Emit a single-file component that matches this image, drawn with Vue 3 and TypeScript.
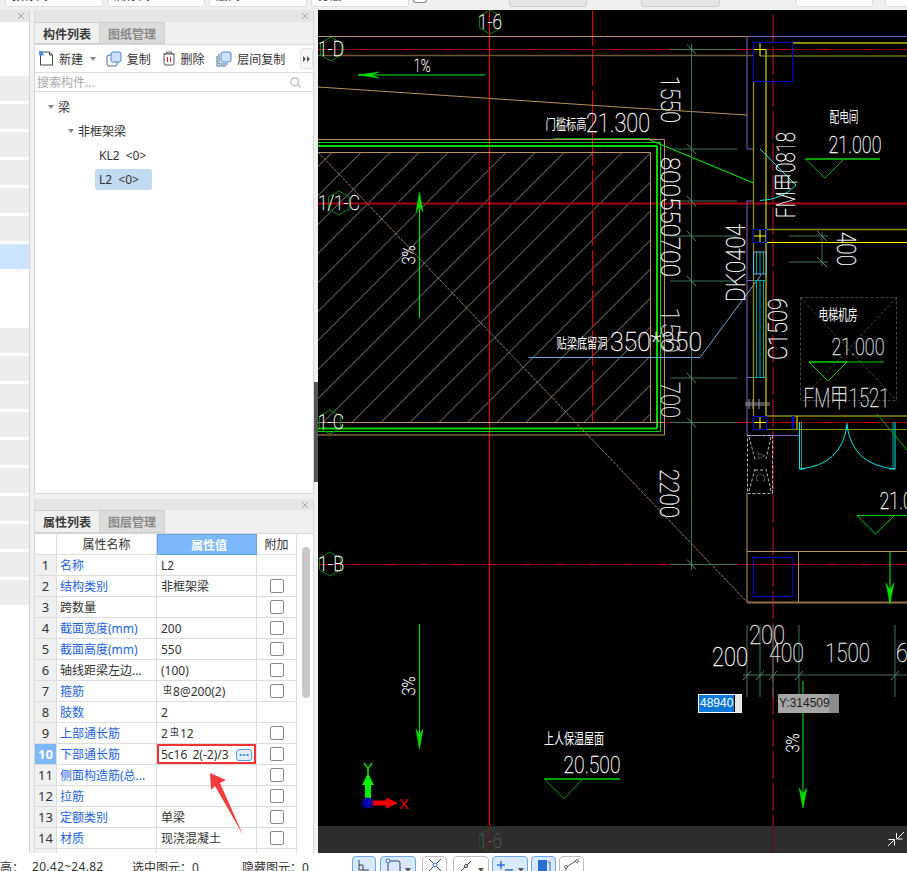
<script setup lang="ts">
type Seg = { x1: number; y1: number; x2: number; y2: number; c: string; w?: number; dash?: string };
type Label = { t: string; x: number; y: number; s: number; len?: number; rot?: number; c?: string; cjk?: boolean };

const ORANGE = '#b8925f';
const BROWN = '#6f5638';
const PURPLE = '#8460c4';
const YELLOW = '#ffff00';
const OLIVE = '#8c8c00';
const BLUE = '#0000d0';
const TEAL = '#00a8a8';
const CYAN = '#00e5e5';
const GREEN = '#00d800';
const DGREEN = '#00a000';
const DIM = '#3f7559';
const RED = '#e00010';
const DRED = '#6a0a14';

const seg = (x1: number, y1: number, x2: number, y2: number, c: string, w = 1, dash?: string): Seg => ({ x1, y1, x2, y2, c, w, dash });

const axes: Seg[] = [
  seg(318, 49.5, 907, 49.5, '#8a0010'),
  seg(318, 49.5, 907, 49.5, '#e00010', 1, '8 34'),
  seg(318, 203.5, 907, 203.5, '#a80010', 2),
  seg(318, 422.5, 907, 422.5, '#8a0010'),
  seg(318, 422.5, 907, 422.5, '#e00010', 1, '10 32'),
  seg(318, 564.5, 907, 564.5, '#8a0010'),
  seg(318, 564.5, 907, 564.5, '#e00010', 1, '8 26'),
  seg(592.5, 10, 592.5, 422, RED, 1.2, '36 4'),
  seg(773, 15, 773, 853, DRED, 2, '28 4'),
  seg(489.5, 10, 489.5, 853, RED, 1.2),
];

const outline: Seg[] = [
  seg(318, 36.5, 747, 36.5, ORANGE),
  seg(747, 36.5, 907, 36.5, PURPLE),
  seg(747, 36.5, 747, 149, PURPLE),
  seg(747, 149, 753, 149, PURPLE),
  seg(747, 201, 747, 435, PURPLE),
  seg(747, 201, 753, 201, PURPLE),
  seg(747, 280.5, 753, 280.5, PURPLE),
  seg(747, 377.5, 753, 377.5, PURPLE),
  seg(747, 435.5, 799, 435.5, PURPLE),
  seg(318, 55.5, 753, 55.5, BROWN, 1.5),
  seg(318, 87, 618, 107, ORANGE),
  seg(618, 107, 747, 115, ORANGE),
  seg(318, 139.5, 664.5, 139.5, ORANGE),
  seg(664.5, 139.5, 664.5, 435, ORANGE),
  seg(318, 435, 664.5, 435, ORANGE),
  seg(318, 142.5, 660.5, 142.5, GREEN),
  seg(660.5, 142.5, 660.5, 431.5, GREEN),
  seg(318, 431.5, 660.5, 431.5, GREEN),
  seg(318, 146, 657, 146, GREEN, 2),
  seg(657, 146, 657, 428.5, GREEN, 2),
  seg(318, 428.5, 657, 428.5, GREEN, 2),
  seg(318, 152.5, 650.5, 152.5, ORANGE),
  seg(650.5, 152.5, 650.5, 422.5, ORANGE),
  seg(318, 422.5, 664, 422.5, ORANGE),
  seg(650, 140, 753.5, 183, '#00d800', 1.3),
  seg(554, 138.5, 650, 138.5, DGREEN),
  seg(318, 152, 747, 602, '#a87f4d', 1, '3 1'),
  seg(528.5, 357.5, 700, 357.5, '#6fa8dc'),
  seg(700, 357.5, 761, 275, '#6fa8dc'),
];

const walls: Seg[] = [
  seg(766, 49.5, 766, 416, YELLOW),
  seg(753.5, 81, 753.5, 416, OLIVE, 1.3),
  seg(792.5, 43, 907, 43, OLIVE, 2),
  seg(760, 56, 907, 56, '#a8a800'),
  seg(760, 43, 760, 56, YELLOW),
  seg(754, 49.5, 766, 49.5, YELLOW),
  seg(766, 229.5, 907, 229.5, OLIVE, 1.5),
  seg(753.5, 242.5, 907, 242.5, YELLOW),
  seg(760, 230, 760, 242, YELLOW),
  seg(754, 236, 766, 236, YELLOW),
  seg(766, 416, 907, 416, OLIVE, 1.5),
  seg(766, 429.5, 907, 429.5, OLIVE),
  seg(760, 417, 760, 429, YELLOW),
  seg(754, 422.5, 766, 422.5, YELLOW),
  seg(756.5, 252, 756.5, 274, TEAL),
  seg(760, 252, 760, 274, TEAL),
  seg(763.5, 252, 763.5, 274, TEAL),
  seg(756.5, 280, 756.5, 377, TEAL),
  seg(760, 280, 760, 377, TEAL),
  seg(763.5, 280, 763.5, 377, TEAL),
  seg(753.5, 280.5, 766, 280.5, TEAL),
  seg(753.5, 377.5, 766, 377.5, TEAL),
  seg(760, 149, 796, 185, CYAN),
  seg(747, 493, 747, 602, ORANGE),
  seg(747, 551.5, 907, 551.5, ORANGE),
  seg(747, 602.5, 907, 602.5, '#8f7048', 2),
  seg(798.5, 551, 798.5, 602, ORANGE),
  seg(745, 403, 770, 403, '#9a9a9a'),
  seg(745, 405, 770, 405, '#9a9a9a'),
  seg(749, 399, 749, 409, '#9a9a9a'),
  seg(753, 399, 753, 409, '#9a9a9a'),
  seg(759, 399, 759, 409, '#9a9a9a'),
  seg(793, 416, 793, 429, BLUE, 2),
  seg(797, 416, 797, 429, YELLOW),
  seg(799.5, 422, 799.5, 469, CYAN),
  seg(801.5, 422, 801.5, 469, TEAL),
  seg(893, 422, 893, 469, TEAL),
  seg(895, 422, 895, 469, CYAN),
  seg(799.5, 469, 805, 469, CYAN),
  seg(889, 469, 895, 469, CYAN),
  seg(877, 414, 907, 450, '#00b000'),
];

const vTicks = [49.5, 149, 201, 236, 281, 378, 422.5, 564.5];
const hTicks = [747, 760, 773, 799, 895];

const dims: Seg[] = [
  seg(691.5, 44, 691.5, 570, DIM),
  ...vTicks.map((y) => seg(670, y, 737, y, DIM)),
  ...vTicks.map((y) => seg(687, y - 5, 696, y + 5, '#4d8a6a')),
  seg(822, 232, 822, 266, DIM),
  seg(789, 236, 828, 236, DIM),
  seg(789, 262, 828, 262, DIM),
  seg(817, 231, 827, 241, '#4d8a6a'),
  seg(817, 257, 827, 267, '#4d8a6a'),
  seg(743, 675, 907, 675, DIM),
  ...hTicks.map((x) => seg(x, 625, x, 697, DIM)),
  ...hTicks.map((x) => seg(x - 4, 680, x + 4, 671, '#4d8a6a')),
];

const arrows: Seg[] = [
  seg(358, 75, 485, 75, DGREEN, 1.5),
  seg(419.5, 194, 419.5, 318, GREEN, 1.2),
  seg(419.5, 624, 419.5, 748, GREEN, 1.2),
  seg(803, 681, 803, 806, DGREEN, 1.5),
  seg(890, 552, 890, 603, GREEN, 1.2),
];
const arrowHeads = [
  '358,75 379,72 372,75 379,78',
  '419.5,192 416,212 419.5,206 423,212',
  '419.5,749 416,729 419.5,735 423,729',
  '803,808 799,788 803,794 807,788',
  '890,604 886,583 890,590 894,583',
];

const triangles = [
  { pts: '805.5,159 825,178 844,159', line: seg(805.5, 159, 880, 159, DGREEN, 2), c: DGREEN },
  { pts: '809,362 828,381 847,362', line: seg(809, 362, 884, 362, GREEN), c: GREEN },
  { pts: '857,515.5 875.5,534 894.5,515.5', line: seg(857, 515.5, 907, 515.5, GREEN), c: GREEN },
  { pts: '544,779 564,798.5 583,779', line: seg(544, 779, 620, 779, DGREEN, 2), c: DGREEN },
];

const hexPoints = (cx: number, cy: number, r = 12) =>
  [0, 1, 2, 3, 4, 5]
    .map((i) => {
      const a = (Math.PI / 3) * i - Math.PI / 2;
      return `${(cx + r * Math.cos(a)).toFixed(1)},${(cy + r * Math.sin(a)).toFixed(1)}`;
    })
    .join(' ');
const hexes = [
  [490, 22],
  [331, 49],
  [339, 203],
  [330, 422],
  [330, 564],
];

const labels: Label[] = [
  { t: '1-6', x: 490, y: 22, s: 20, len: 24 },
  { t: '1-D', x: 331, y: 49, s: 20, len: 26 },
  { t: '1/1-C', x: 339, y: 203, s: 20, len: 42 },
  { t: '1-C', x: 331, y: 422, s: 20, len: 26 },
  { t: '1-B', x: 331, y: 564, s: 20, len: 26 },
  { t: '1%', x: 422, y: 65, s: 19, len: 17 },
  { t: '3%', x: 408, y: 255, s: 19, len: 19, rot: -90 },
  { t: '3%', x: 408, y: 686, s: 19, len: 19, rot: -90 },
  { t: '3%', x: 792, y: 743, s: 19, len: 19, rot: -90 },
  { t: '门槛标高', x: 566, y: 123, s: 14, len: 41, cjk: true },
  { t: '21.300', x: 618, y: 123, s: 26, len: 64 },
  { t: '贴梁底留洞', x: 582, y: 342, s: 14, len: 51, cjk: true },
  { t: '350*350', x: 656, y: 342, s: 26, len: 92 },
  { t: '配电间', x: 844, y: 115, s: 15, len: 29, cjk: true },
  { t: '21.000', x: 855, y: 145, s: 23, len: 53 },
  { t: '电梯机房', x: 838, y: 313, s: 15, len: 39, cjk: true },
  { t: '21.000', x: 858, y: 347, s: 23, len: 53, c: '#e0e0e0' },
  { t: 'FM甲1521', x: 846.5, y: 398, s: 26, len: 86, c: '#e8e8e8' },
  { t: '21.000', x: 906, y: 501, s: 23, len: 53 },
  { t: '上人保温屋面', x: 574, y: 737, s: 15, len: 60, cjk: true },
  { t: '20.500', x: 592, y: 765, s: 23, len: 57 },
  { t: '1550', x: 670, y: 99.5, s: 26, len: 47, rot: 90 },
  { t: '800', x: 670, y: 177, s: 26, len: 40, rot: 90 },
  { t: '550', x: 670, y: 217, s: 26, len: 40, rot: 90 },
  { t: '700', x: 670, y: 257, s: 26, len: 40, rot: 90 },
  { t: '150', x: 670, y: 330, s: 26, len: 46, rot: 90, c: '#d0d0d0' },
  { t: '700', x: 670, y: 400, s: 26, len: 36, rot: 90, c: '#e0e0e0' },
  { t: '2200', x: 669, y: 493.5, s: 26, len: 49, rot: 90 },
  { t: '400', x: 845.5, y: 249, s: 26, len: 34, rot: 90 },
  { t: 'FM甲0818', x: 786, y: 175, s: 26, len: 86, rot: -90 },
  { t: 'DK0404', x: 735.5, y: 263, s: 26, len: 78, rot: -90 },
  { t: 'C1509', x: 778, y: 329, s: 26, len: 62, rot: -90 },
  { t: '200', x: 730, y: 657, s: 25, len: 36 },
  { t: '200', x: 767, y: 635, s: 25, len: 36, c: '#e0e0e0' },
  { t: '400', x: 786.5, y: 653, s: 25, len: 35, c: '#e0e0e0' },
  { t: '1500', x: 847.5, y: 653, s: 25, len: 45, c: '#e8e8e8' },
  { t: '6', x: 902, y: 653, s: 25, len: 12, c: '#e8e8e8' },
];

type Row = { no: number; name: string; value?: string; symbol?: [string, string]; link?: boolean; check?: boolean };
const rows: Row[] = [
  { no: 1, name: '名称', value: 'L2', link: true, check: false },
  { no: 2, name: '结构类别', value: '非框架梁', link: true, check: true },
  { no: 3, name: '跨数量', value: '', check: true },
  { no: 4, name: '截面宽度(mm)', value: '200', link: true, check: true },
  { no: 5, name: '截面高度(mm)', value: '550', link: true, check: true },
  { no: 6, name: '轴线距梁左边...', value: '(100)', check: true },
  { no: 7, name: '箍筋', symbol: ['', '8@200(2)'], link: true, check: true },
  { no: 8, name: '肢数', value: '2', link: true, check: false },
  { no: 9, name: '上部通长筋', symbol: ['2', '12'], link: true, check: true },
  { no: 10, name: '下部通长筋', value: '5c16 2(-2)/3', link: true, check: true },
  { no: 11, name: '侧面构造筋(总...', value: '', link: true, check: true },
  { no: 12, name: '拉筋', value: '', link: true, check: true },
  { no: 13, name: '定额类别', value: '单梁', link: true, check: true },
  { no: 14, name: '材质', value: '现浇混凝土', link: true, check: true },
  { no: 15, name: '', value: '', check: false },
];
const activeRow = 10;

const sideRows = [
  ...[0, 1, 2, 3, 4, 5].map(() => 'fill'),
  'active',
  'gap',
  'gap',
  ...[0, 1, 2, 3, 4, 5, 6, 7, 8, 9].map(() => 'fill'),
];
</script>

<template>
  <div class="app">
    <div class="topbar">
      <span class="field" style="width: 98px">顶标高</span>
      <span class="field" style="width: 98px">底标高</span>
      <span class="field" style="width: 98px">层高</span>
      <span class="field" style="width: 98px">分层1</span>
      <span class="tick"></span>
      <span class="top-label" style="width: 74px">照射长度:</span>
      <span class="field off" style="width: 78px">0</span>
      <span class="top-label" style="width: 46px">复制长度:</span>
      <span class="field off" style="width: 79px">0</span>
      <span class="top-label" style="width: 67px">连梁总距离:</span>
      <span class="field" style="width: 78px">100</span>
      <span class="field" style="width: 30px; margin-left: 8px">+</span>
    </div>

    <div class="main">
      <aside class="side">
        <div class="bar">
          <svg class="close" viewBox="0 0 8 8"><path d="M1 1l6 6M7 1l-6 6" /></svg>
        </div>
        <div class="side-list">
          <div v-for="(kind, i) in sideRows" :key="i" class="side-row" :class="kind"></div>
        </div>
      </aside>

      <div class="panels">
        <section class="panel upper">
          <div class="bar">
            <svg class="close" viewBox="0 0 8 8"><path d="M1 1l6 6M7 1l-6 6" /></svg>
          </div>
          <div class="tabs">
            <span class="tab on">构件列表</span>
            <span class="tab">图纸管理</span>
          </div>
          <div class="tools">
            <span class="tool new">
              <svg width="15" height="15" viewBox="0 0 15 15">
                <path d="M1.500 3.500V14h12V4l-3-3H5" fill="#fff" stroke="#444" />
                <path d="M10.500 1v3h3" fill="none" stroke="#444" />
                <rect x="0" y="0" width="4.500" height="4.500" fill="#4a8fe0" />
              </svg>
              新建<i class="caret"></i>
            </span>
            <span class="tool copy">
              <svg width="16" height="16" viewBox="0 0 16 16">
                <rect x="1" y="4" width="10" height="11" rx="2" fill="#fff" stroke="#4a6a90" />
                <rect x="5" y="1" width="10" height="10" rx="2" fill="#cfe2fa" stroke="#4a86d8" />
              </svg>
              复制
            </span>
            <span class="tool del">
              <svg width="14" height="15" viewBox="0 0 14 15">
                <path d="M1 3h12M4.500 3V1h5v2" fill="none" stroke="#555" />
                <rect x="2" y="3" width="10" height="11" rx="2" fill="#fff" stroke="#555" />
                <path d="M5.500 6v5M8.500 6v5" stroke="#d02020" />
              </svg>
              删除
            </span>
            <span class="tool layer">
              <svg width="16" height="16" viewBox="0 0 16 16">
                <path d="M1 5v10h9M3 3v10h9" fill="none" stroke="#4a6a90" />
                <rect x="5" y="1" width="10" height="10" rx="2" fill="#cfe2fa" stroke="#4a86d8" />
              </svg>
              层间复制
            </span>
            <span class="more">
              <svg width="7" height="6" viewBox="0 0 7 6"><path d="M0 0l3 3-3 3zM4 0l3 3-3 3z" fill="#555" /></svg>
            </span>
          </div>
          <div class="search">
            <span>搜索构件...</span>
            <svg width="11" height="11" viewBox="0 0 11 11">
              <circle cx="4.800" cy="4.800" r="4" fill="none" stroke="#bbb" stroke-width="1.200" />
              <path d="M8 8l2.500 2.500" stroke="#bbb" stroke-width="1.200" />
            </svg>
          </div>
          <ul class="tree">
            <li class="lv1"><i class="caret"></i>梁</li>
            <li class="lv2"><i class="caret"></i>非框架梁</li>
            <li class="lv3">KL2 &lt;0&gt;</li>
            <li class="lv3"><span class="picked">L2 &lt;0&gt;</span></li>
          </ul>
        </section>

        <section class="panel lower">
          <div class="bar">
            <svg class="close" viewBox="0 0 8 8"><path d="M1 1l6 6M7 1l-6 6" /></svg>
          </div>
          <div class="tabs">
            <span class="tab on">属性列表</span>
            <span class="tab">图层管理</span>
          </div>
          <div class="grid-wrap">
            <div class="grid">
              <div class="grid-row head">
                <span class="cell no"></span>
                <span class="cell name">属性名称</span>
                <span class="cell val">属性值</span>
                <span class="cell extra">附加</span>
              </div>
              <div v-for="row in rows" :key="row.no" class="grid-row">
                <span class="cell no" :class="{ current: row.no === activeRow }">{{ row.no }}</span>
                <span class="cell name" :class="{ link: row.link }">{{ row.name }}</span>
                <span class="cell val" :class="{ editing: row.no === activeRow }">
                  <template v-if="row.symbol">{{ row.symbol[0] }}<sup class="rebar">虫</sup>{{ row.symbol[1] }}</template>
                  <template v-else>{{ row.value }}</template>
                  <span v-if="row.no === activeRow" class="dots">···</span>
                </span>
                <span class="cell extra"><i v-if="row.check" class="box"></i></span>
              </div>
            </div>
            <div class="scroll"><div class="thumb"></div></div>
          </div>
        </section>
      </div>

      <div class="splitter"><div class="grip"></div></div>

      <div class="canvas">
        <svg class="drawing" viewBox="318 10 589 843" width="589" height="843">
          <defs>
            <clipPath id="hatch-clip"><rect x="318" y="153" width="332" height="269" /></clipPath>
          </defs>

          <g clip-path="url(#hatch-clip)">
            <line
              v-for="k in 32"
              :key="k"
              :x1="484.500 + 29 * (k - 12) - 153"
              y1="153"
              :x2="484.500 + 29 * (k - 12) - 422"
              y2="422"
              stroke="#858585"
            />
          </g>

          <line
            v-for="(l, i) in [...axes, ...outline, ...dims, ...walls, ...arrows]"
            :key="i"
            :x1="l.x1"
            :y1="l.y1"
            :x2="l.x2"
            :y2="l.y2"
            :stroke="l.c"
            :stroke-width="l.w"
            :stroke-dasharray="l.dash"
          />

          <polygon v-for="(p, i) in arrowHeads" :key="'h' + i" :points="p" fill="#00e000" stroke="#00e000" stroke-width="0.500" />
          <polygon v-for="(h, i) in hexes" :key="'x' + i" :points="hexPoints(h[0], h[1])" fill="none" stroke="#0a8a0a" />

          <g fill="none" :stroke="BLUE">
            <rect x="753.500" y="42.500" width="39" height="39" />
            <rect x="753.500" y="229.500" width="13" height="13" />
            <rect x="753.500" y="416.500" width="13" height="13" />
            <rect x="753.500" y="557.500" width="39" height="39" />
          </g>
          <rect x="753.500" y="252" width="13" height="22" fill="none" stroke="#6fb0e0" />

          <g fill="none" :stroke="CYAN">
            <path d="M760 200.500 Q782 200 796 185" />
            <path d="M799.500 469 Q842 465 847 425 Q852 465 895 469" />
            <path d="M847 423v6" />
          </g>

          <g fill="none" stroke="#454545" stroke-dasharray="3 2">
            <rect x="800.500" y="297.500" width="96" height="103" />
            <path d="M800.500 297.500L896.500 400.500M896.500 297.500L800.500 400.500" />
          </g>

          <g fill="none" stroke="#b8b8b8" stroke-dasharray="3 2">
            <rect x="747.500" y="435.500" width="25" height="58" />
            <path d="M749 437l6 22M771 437l-5 22M749 491l6-22M771 491l-5-22M755 470h10" />
          </g>
          <text class="cad thin" x="760" y="456" font-size="13" fill="#d0d0d0" text-anchor="middle" dominant-baseline="central" transform="rotate(90 760 456)">A</text>
          <text class="cad thin" x="760" y="478" font-size="13" fill="#d0d0d0" text-anchor="middle" dominant-baseline="central" transform="rotate(90 760 478)">C</text>

          <g v-for="(t, i) in triangles" :key="'t' + i">
            <polygon :points="t.pts" fill="none" :stroke="t.c" />
            <line :x1="t.line.x1" :y1="t.line.y1" :x2="t.line.x2" :y2="t.line.y2" :stroke="t.c" :stroke-width="t.line.w" />
          </g>

          <text
            v-for="(l, i) in labels"
            :key="'l' + i"
            class="cad"
            :class="{ thin: !l.cjk, han: l.cjk }"
            :x="l.x"
            :y="l.y"
            :font-size="l.s"
            :fill="l.c || '#ffffff'"
            :stroke="l.cjk ? undefined : l.c || '#ffffff'"
            :textLength="l.len"
            lengthAdjust="spacingAndGlyphs"
            text-anchor="middle"
            dominant-baseline="central"
            :transform="l.rot ? `rotate(${l.rot} ${l.x} ${l.y})` : undefined"
          >{{ l.t }}</text>

          <!-- UCS marker -->
          <rect x="365" y="782" width="6" height="21" fill="#00f000" />
          <polygon points="368,773 374,785 362,785" fill="#00f000" />
          <rect x="371" y="800.500" width="17" height="5" fill="#f00000" />
          <polygon points="398,803 386,797.500 386,808.500" fill="#f00000" />
          <circle cx="367.700" cy="803" r="5.500" fill="#0000a8" />
          <text class="axis" x="368" y="767" fill="#00f000" text-anchor="middle" dominant-baseline="central">Y</text>
          <text class="axis" x="404" y="803" fill="#f00000" text-anchor="middle" dominant-baseline="central">X</text>

          <!-- bottom strip sits over the drawing -->
          <rect x="318" y="826" width="589" height="27" fill="#2d2d2d" />
          <line x1="489.500" y1="826" x2="489.500" y2="853" stroke="#7a1018" />
          <line x1="773" y1="826" x2="773" y2="853" stroke="#4a1a1e" stroke-width="2" />
          <polygon :points="hexPoints(490, 840)" fill="none" stroke="#254a25" />
          <text class="cad thin" x="490" y="841" font-size="20" fill="#6e6e6e" textLength="24" lengthAdjust="spacingAndGlyphs" text-anchor="middle" dominant-baseline="central">1-6</text>
          <path d="M888 845l7-7M888.500 838.500h6v6M904 831l-7 7M896.500 832v6h6" fill="none" stroke="#fff" transform="translate(0 1)" />
        </svg>

        <div class="coord x-input"><span class="sel">48940</span></div>
        <div class="coord y-tip">Y:314509</div>
      </div>
    </div>

    <footer class="status">
      <span class="stat first">标高：</span>
      <span class="stat range">20.42~24.82</span>
      <span class="stat chosen">选中图元：0</span>
      <span class="stat hidden-count">隐藏图元：0</span>
      <div class="snaps">
        <span class="snap on first-snap">
          <svg width="14" height="16" viewBox="0 0 14 16"><path d="M2 2v10h10M2 7h4v5" fill="none" stroke="#345" /></svg>
        </span>
        <span class="snap on wide">
          <svg width="16" height="16" viewBox="0 0 16 16"><path d="M3 3h10a2 2 0 0 1 2 2v10M3 3v12" fill="none" stroke="#345" /><circle cx="3" cy="3" r="2" fill="#fff" stroke="#2a70d0" /></svg>
          <i class="caret"></i>
        </span>
        <span class="snap small gap">
          <svg width="16" height="16" viewBox="0 0 16 16"><path d="M2 1l12 12M14 1L2 13" stroke="#345" /><circle cx="8" cy="7" r="2" fill="#fff" stroke="#2a70d0" /></svg>
        </span>
        <span class="snap wide">
          <svg width="16" height="16" viewBox="0 0 16 16"><path d="M2 14L13 3" stroke="#345" /><circle cx="8" cy="8" r="1.500" fill="#fff" stroke="#345" /></svg>
          <i class="caret"></i>
        </span>
        <span class="snap on wide">
          <svg width="18" height="16" viewBox="0 0 18 16"><path d="M5 3v8M1 7h8M9 12h8" fill="none" stroke="#2a70d0" stroke-width="1.400" /></svg>
          <i class="caret"></i>
        </span>
        <span class="snap on small">
          <svg width="14" height="16" viewBox="0 0 14 16"><rect x="1" y="2" width="9" height="12" fill="#2a70d0" /><path d="M11 4h2v10H4" fill="none" stroke="#2a70d0" /></svg>
        </span>
        <span class="snap small">
          <svg width="16" height="16" viewBox="0 0 16 16"><path d="M2 14V9l10-6" fill="none" stroke="#666" /><circle cx="2" cy="9" r="1.500" fill="#fff" stroke="#666" /><circle cx="13" cy="3" r="1.500" fill="#fff" stroke="#666" /></svg>
        </span>
      </div>
    </footer>

    <svg class="pointer" width="40" height="68" viewBox="0 0 40 68">
      <polygon points="6,3 22,10 16,13 39,65 11,16 7,20" fill="#f43c3c" />
    </svg>
  </div>
</template>

<style scoped>
.app {
  position: relative;
  width: 907px;
  height: 871px;
  overflow: hidden;
  background: #f0f0f0;
  color: #333;
  font-family: "Noto Sans", "Noto Sans CJK SC", sans-serif;
  font-size: 12px;
}

.topbar {
  display: flex;
  align-items: flex-end;
  gap: 4px;
  height: 10px;
  padding: 0 0 3px 5px;
  box-sizing: border-box;
  overflow: hidden;
}

.field {
  flex: none;
  box-sizing: border-box;
  height: 24px;
  line-height: 23px;
  padding-left: 6px;
  background: #fff;
  border: 1px solid #dcdcdc;
  border-radius: 3px;
}

.field.off {
  background: #e6e6e6;
  border-color: #c9cdd4;
  color: #999;
}

.tick {
  flex: none;
  box-sizing: border-box;
  width: 14px;
  height: 20px;
  margin-bottom: 4px;
  background: #fff;
  border: 1px solid #888;
  border-radius: 2px;
}

.top-label {
  flex: none;
  height: 24px;
  line-height: 23px;
  overflow: hidden;
  white-space: nowrap;
}

.main {
  display: flex;
  height: 843px;
}

.side {
  flex: none;
  width: 30px;
  margin-right: 4px;
  display: flex;
  flex-direction: column;
  background: #fff;
  border-right: 1px solid #d4d4d4;
  box-sizing: border-box;
}

.bar {
  flex: none;
  display: flex;
  align-items: center;
  justify-content: flex-end;
  height: 12px;
  padding-right: 4px;
  background: #e6e6e6;
}

.close {
  width: 8px;
  height: 8px;
}

.close path {
  fill: none;
  stroke: #a8a8a8;
  stroke-width: 1;
}

.side-list {
  display: flex;
  flex-direction: column;
  gap: 3px;
  padding-top: 54px;
}

.side-row {
  height: 25px;
}

.side-row.fill {
  background: #ececec;
}

.side-row.active {
  background: #cce4ff;
}

.panels {
  flex: none;
  display: flex;
  flex-direction: column;
  gap: 5px;
  width: 280px;
}

.panel {
  display: flex;
  flex-direction: column;
  box-sizing: border-box;
  background: #fff;
  border: 1px solid #d8d8d8;
  border-top: 0;
  overflow: hidden;
}

.upper {
  height: 484px;
}

.lower {
  height: 354px;
  border-bottom: 0;
}

.lower .bar {
  height: 11px;
}

.lower .tabs {
  height: 23px;
}

.tabs {
  flex: none;
  display: flex;
  height: 22px;
  background: #f0f0f0;
  border-bottom: 1px solid #d8d8d8;
}

.tab {
  box-sizing: border-box;
  width: 65px;
  text-align: center;
  line-height: 23px;
  background: #dcdcdc;
  border: 1px solid #cdcdcd;
  border-left: 0;
  color: #888;
  font-weight: 700;
}

.tab.on {
  background: #f0f0f0;
  color: #3a3a3a;
}

.tools {
  flex: none;
  display: flex;
  align-items: center;
  height: 27px;
  padding-left: 4px;
  border-bottom: 1px solid #dedede;
}

.tool {
  display: flex;
  align-items: center;
  gap: 5px;
  white-space: nowrap;
}

.new {
  width: 67px;
}

.copy {
  width: 56px;
}

.del {
  width: 55px;
}

.layer {
  width: 84px;
}

.caret {
  display: inline-block;
  width: 0;
  height: 0;
  border: 3px solid transparent;
  border-top: 4px solid #888;
  border-bottom: 0;
}

.new .caret {
  margin-left: 2px;
}

.more {
  display: flex;
  align-items: center;
  justify-content: center;
  width: 11px;
  height: 19px;
  background: #f6f6f6;
  border: 1px solid #e4e4e4;
  border-radius: 3px;
}

.search {
  flex: none;
  display: flex;
  align-items: center;
  justify-content: space-between;
  height: 18px;
  padding: 0 12px 0 2px;
  border-bottom: 1px solid #dedede;
  color: #aaa;
}

.tree {
  list-style: none;
  margin: 0;
  padding: 3px 0 0;
  word-spacing: 3px;
}

.tree li {
  display: flex;
  align-items: center;
  height: 24px;
}

.tree .caret {
  margin-right: 4px;
}

.lv1 {
  padding-left: 13px;
}

.lv2 {
  padding-left: 33px;
}

.lv3 {
  padding-left: 64px;
}

.tree .picked {
  margin-left: -4px;
  padding: 0 13px 0 4px;
  line-height: 21px;
  background: #c2daf2;
  border-radius: 3px;
}

.grid-wrap {
  flex: 1;
  display: flex;
  min-height: 0;
  overflow: hidden;
}

.grid {
  flex: none;
  width: 262px;
  word-spacing: 2px;
}

.grid-row {
  display: grid;
  grid-template-columns: 22px 100px 100px 40px;
  height: 21px;
}

.grid-row.head {
  text-align: center;
}

.cell {
  display: flex;
  align-items: center;
  box-sizing: border-box;
  position: relative;
  padding-left: 3px;
  border-right: 1px solid #dcdcdc;
  border-bottom: 1px solid #dcdcdc;
  white-space: nowrap;
  overflow: hidden;
}

.head .cell {
  justify-content: center;
  padding-left: 0;
}

.head .val {
  background: #7db8fa;
  border: 1px solid #5fa0ea;
  color: #fff;
  font-weight: 700;
}

.cell.no {
  justify-content: center;
  padding-left: 0;
  background: #f0f0f0;
  font-size: 13px;
}

.head .no {
  background: #fff;
}

.cell.no.current {
  background: #7db8fa;
  color: #fff;
  font-weight: 700;
}

.cell.name.link {
  color: #2463e0;
}

.cell.val {
  padding-left: 4px;
}

.cell.val.editing {
  box-shadow: inset 0 0 0 2px #f03434;
}

.rebar {
  font-size: 9px;
  line-height: 1;
  margin: -3px 1px 0 2px;
  vertical-align: 3px;
}

.dots {
  position: absolute;
  left: 79px;
  top: 5px;
  box-sizing: border-box;
  width: 16px;
  height: 12px;
  line-height: 9px;
  text-align: center;
  font-size: 12px;
  font-weight: 700;
  color: #2f7fe0;
  background: #e3edfb;
  border: 1px solid #5a9ae8;
  border-radius: 3px;
}

.cell.extra {
  justify-content: center;
  padding-left: 0;
}

.box {
  box-sizing: border-box;
  width: 14px;
  height: 14px;
  background: #fff;
  border: 1px solid #888;
  border-radius: 2px;
}

.scroll {
  flex: none;
  width: 16px;
  padding: 13px 0 0 5px;
  box-sizing: border-box;
}

.thumb {
  width: 8px;
  height: 151px;
  background: #c8c8c8;
  border-radius: 4px;
}

.splitter {
  flex: none;
  width: 4px;
  padding-top: 372px;
}

.grip {
  height: 100px;
  background: #555;
}

.canvas {
  position: relative;
  flex: none;
  width: 589px;
  height: 843px;
  background: #000;
}

.drawing {
  display: block;
}

.cad {
  font-family: Roboto, "Liberation Sans", "Noto Sans CJK SC", sans-serif;
}

.thin {
  font-weight: 100;
  stroke-width: 0.3px;
}

.han {
  font-family: "Noto Sans CJK SC", sans-serif;
  font-weight: 400;
}

.axis {
  font-family: "Liberation Sans", sans-serif;
  font-size: 15px;
}

.coord {
  position: absolute;
  top: 684px;
  box-sizing: border-box;
  height: 19px;
  font-family: "Liberation Sans", sans-serif;
  font-size: 12px;
  line-height: 17px;
}

.x-input {
  left: 380px;
  width: 44px;
  background: #e8e8e8;
  border: 1px solid #fff;
  border-right: 0;
}

.sel {
  display: block;
  width: 36px;
  height: 17px;
  padding-left: 1px;
  box-sizing: border-box;
  background: #0a78d7;
  border-right: 1px solid #000;
  color: #fff;
  overflow: hidden;
}

.y-tip {
  left: 460px;
  width: 61px;
  padding: 1px 0 0 1px;
  background: linear-gradient(90deg, #a6a6a6 0 51px, #8c8c8c 51px);
  color: #1c1c1c;
}

.status {
  position: relative;
  height: 18px;
  background: #fff;
  overflow: hidden;
  white-space: nowrap;
}

.stat {
  position: absolute;
  top: 5px;
}

.first {
  right: calc(100% - 24px);
}

.range {
  left: 32px;
  letter-spacing: 0.3px;
}

.chosen {
  left: 132px;
}

.hidden-count {
  left: 242px;
}

.snaps {
  position: absolute;
  left: 352px;
  top: 3px;
  display: flex;
  gap: 3px;
}

.snap {
  display: flex;
  align-items: flex-start;
  justify-content: center;
  gap: 4px;
  box-sizing: border-box;
  height: 24px;
  padding-top: 1px;
  background: #fff;
  border: 1px solid #bdbdbd;
  border-radius: 4px;
}

.snap.on {
  background: #d9e8fb;
  border-color: #6ea8e8;
}

.snap.first-snap {
  width: 24px;
  margin-right: 1px;
}

.snap.small {
  width: 25px;
}

.snap.wide {
  width: 36px;
}

.snap.gap {
  margin-left: 3px;
  margin-right: 3px;
}

.snap .caret {
  margin-top: 10px;
  border-top-color: #555;
}

.pointer {
  position: absolute;
  left: 204px;
  top: 770px;
}
</style>
